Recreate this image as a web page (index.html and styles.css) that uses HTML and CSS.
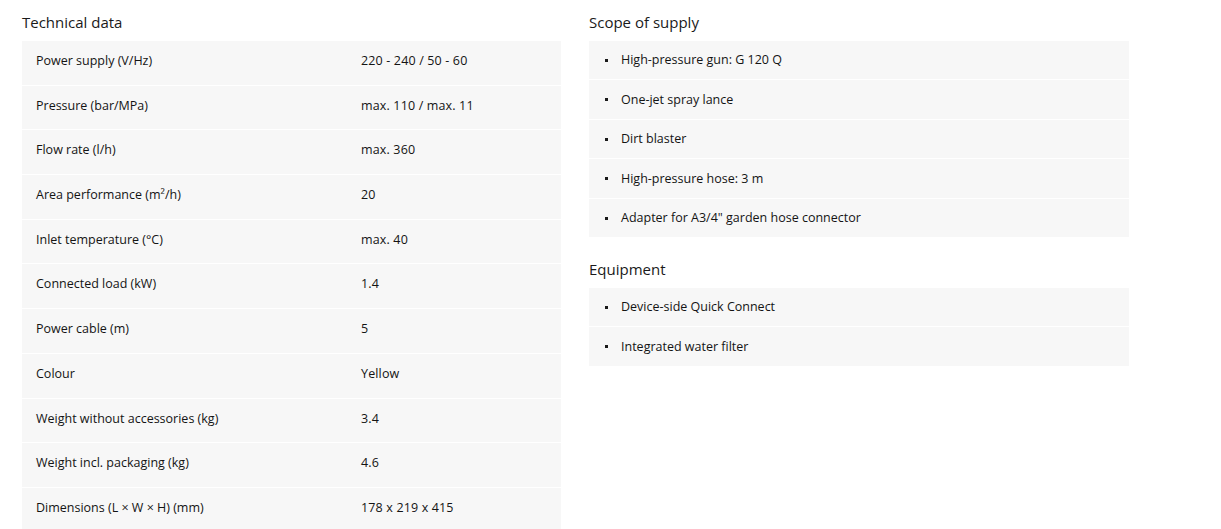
FILE: index.html
```html
<!DOCTYPE html>
<html lang="en">
<head>
<meta charset="utf-8">
<title>Technical data</title>
<link rel="stylesheet" href="styles.css">
</head>
<body>
<div class="page">
  <section class="col col-left">
    <h2 class="heading">Technical data</h2>
    <div class="table">
      <div class="row"><div class="cell label">Power supply (V/Hz)</div><div class="cell value">220 - 240 / 50 - 60</div></div>
      <div class="row"><div class="cell label">Pressure (bar/MPa)</div><div class="cell value">max. 110 / max. 11</div></div>
      <div class="row"><div class="cell label">Flow rate (l/h)</div><div class="cell value">max. 360</div></div>
      <div class="row"><div class="cell label">Area performance (m²/h)</div><div class="cell value">20</div></div>
      <div class="row"><div class="cell label">Inlet temperature (°C)</div><div class="cell value">max. 40</div></div>
      <div class="row"><div class="cell label">Connected load (kW)</div><div class="cell value">1.4</div></div>
      <div class="row"><div class="cell label">Power cable (m)</div><div class="cell value">5</div></div>
      <div class="row"><div class="cell label">Colour</div><div class="cell value">Yellow</div></div>
      <div class="row"><div class="cell label">Weight without accessories (kg)</div><div class="cell value">3.4</div></div>
      <div class="row"><div class="cell label">Weight incl. packaging (kg)</div><div class="cell value">4.6</div></div>
      <div class="row"><div class="cell label">Dimensions (L × W × H) (mm)</div><div class="cell value">178 x 219 x 415</div></div>
    </div>
  </section>
  <section class="col col-right">
    <h2 class="heading">Scope of supply</h2>
    <ul class="list">
      <li class="item">High-pressure gun: G 120 Q</li>
      <li class="item">One-jet spray lance</li>
      <li class="item">Dirt blaster</li>
      <li class="item">High-pressure hose: 3 m</li>
      <li class="item">Adapter for A3/4" garden hose connector</li>
    </ul>
    <h2 class="heading heading-spaced">Equipment</h2>
    <ul class="list">
      <li class="item">Device-side Quick Connect</li>
      <li class="item">Integrated water filter</li>
    </ul>
  </section>
</div>
</body>
</html>
```

FILE: styles.css
```css
* { box-sizing: border-box; }

html, body {
  margin: 0;
  padding: 0;
  background: #ffffff;
}

body {
  font-family: "Open Sans", "Liberation Sans", sans-serif;
  color: #141414;
  font-size: 12.5px;
}

.page {
  display: flex;
  gap: 28px;
  padding: 11px 22px 0 22px;
}

.col-left { width: 539px; }
.col-right { width: 540px; }

.heading {
  margin: 0 0 8px 0;
  font-size: 15px;
  font-weight: 400;
  line-height: 22px;
  color: #1a1a1a;
}

.heading-spaced { margin-top: 20px; }

.table {
  display: flex;
  flex-direction: column;
}

.row {
  display: grid;
  grid-template-columns: 325px 1fr;
  background: #f7f7f7;
  border-bottom: 1px solid #ffffff;
}

.cell {
  padding: 11px 14px 14.7px 14px;
  line-height: 18px;
}

.value {
  letter-spacing: 0.15px;
}

.list {
  list-style: none;
  margin: 0;
  padding: 0;
}

.item {
  position: relative;
  background: #f7f7f7;
  border-bottom: 1px solid #ffffff;
  padding: 10.4px 14px 10px 32px;
  line-height: 18px;
}

.item::before {
  content: "";
  position: absolute;
  left: 16px;
  top: 18px;
  width: 3px;
  height: 3px;
  background: #1a1a1a;
}
```
